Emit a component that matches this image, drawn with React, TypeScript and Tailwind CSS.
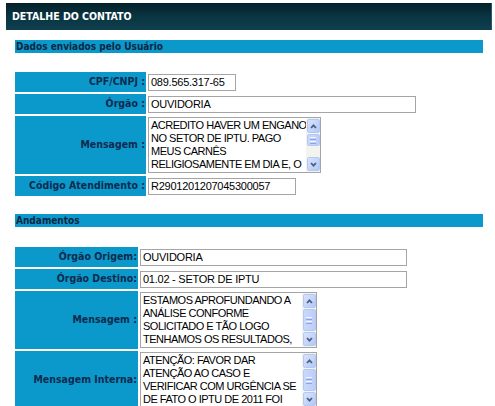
const labelFont = { fontFamily: '"DejaVu Sans Condensed", "Liberation Sans", sans-serif' };

function ScrollArrow({ up }: { up?: boolean }) {
  return (
    <div className="h-[14px] w-[13px] rounded-[2px] border border-[#b4c8f6] bg-gradient-to-br from-[#d8e4fd] to-[#b3c8f5] flex items-center justify-center">
      <svg width="7" height="5" viewBox="0 0 7 5">
        <path d={up ? "M1 4 L3.5 1.3 L6 4" : "M1 1 L3.5 3.7 L6 1"} fill="none" stroke="#4d6185" strokeWidth="1.8" />
      </svg>
    </div>
  );
}

function Scrollbar({ thumb }: { thumb: number }) {
  return (
    <div className="w-[14px] h-full bg-[#f3f3ef] flex flex-col items-center pt-[1px] pb-[1px]">
      <ScrollArrow up />
      <div
        className="w-[13px] rounded-[2px] border border-[#b4c8f6] bg-gradient-to-r from-[#c9d8fc] to-[#bccdf7] flex flex-col items-center justify-center gap-[1px] mt-[1px]"
        style={{ height: thumb }}
      >
        <div className="w-[6px] h-[1px] bg-[#eef3fe]" />
        <div className="w-[6px] h-[1px] bg-[#8ca3e0]" />
        <div className="w-[6px] h-[1px] bg-[#eef3fe]" />
        <div className="w-[6px] h-[1px] bg-[#8ca3e0]" />
      </div>
      <div className="flex-1" />
      <ScrollArrow />
    </div>
  );
}

function TextBox({ value, width }: { value: string; width: string }) {
  return (
    <div
      className={`${width} h-[17px] border border-[#a5a5a5] bg-white px-[2px] text-[11px] leading-[15px] text-black tracking-[-0.25px] whitespace-nowrap overflow-hidden`}
      style={{ fontFamily: '"Liberation Sans", Arial, sans-serif' }}
    >
      {value}
    </div>
  );
}

function TextArea({ lines, width, height, thumb }: { lines: string[]; width: string; height: string; thumb: number }) {
  return (
    <div className={`${width} ${height} border border-[#a5a5a5] bg-white flex overflow-hidden`}>
      <div
        className="flex-1 pl-[2px] pt-[1px] text-[11px] leading-[13px] text-black tracking-[-0.5px] overflow-hidden"
        style={{ fontFamily: '"Liberation Sans", Arial, sans-serif' }}
      >
        {lines.map((l) => (
          <div key={l} className="whitespace-nowrap">{l}</div>
        ))}
      </div>
      <Scrollbar thumb={thumb} />
    </div>
  );
}

function Row({ label, labelW, h, children }: { label: string; labelW: string; h: string; children: React.ReactNode }) {
  return (
    <div className={`flex gap-[2px] ${h}`}>
      <div
        className={`${labelW} bg-[#0b98ca] flex items-center justify-end pr-[1px] text-[10.5px] font-bold text-[#0e2b4f]`}
        style={labelFont}
      >
        {label}
      </div>
      <div className="flex items-center">{children}</div>
    </div>
  );
}

function SectionBar({ title }: { title: string }) {
  return (
    <div
      className="ml-[15px] w-[468px] h-[13px] bg-[#0b98ca] pl-[1px] text-[10px] leading-[13px] font-bold text-[#0b2744]"
      style={labelFont}
    >
      {title}
    </div>
  );
}

export default function App() {
  return (
    <div className="w-[495px] h-[406px] bg-white overflow-hidden pt-[3px]">
      <div
        className="ml-[6px] w-[486px] h-[27px] bg-gradient-to-b from-[#03202a] via-[#0a3542] to-[#0f3f4e] border-r border-[#2d5866] flex items-center pl-[6px] text-[10.5px] font-bold text-white"
        style={labelFont}
      >
        DETALHE DO CONTATO
      </div>

      <div className="mt-[10px]">
        <SectionBar title="Dados enviados pelo Usuário" />
      </div>

      <div className="mt-[19px] ml-[15px] flex flex-col gap-[2px]">
        <Row label="CPF/CNPJ :" labelW="w-[131px]" h="h-[20px]">
          <TextBox value="089.565.317-65" width="w-[88px]" />
        </Row>
        <Row label="Órgão :" labelW="w-[131px]" h="h-[20px]">
          <TextBox value="OUVIDORIA" width="w-[268px]" />
        </Row>
        <Row label="Mensagem :" labelW="w-[131px]" h="h-[58px]">
          <TextArea
            width="w-[173px]"
            height="h-[56px]"
            thumb={12}
            lines={["ACREDITO HAVER UM ENGANO", "NO SETOR DE IPTU. PAGO", "MEUS CARNÊS", "RELIGIOSAMENTE EM DIA E, O"]}
          />
        </Row>
        <Row label="Código Atendimento :" labelW="w-[131px]" h="h-[20px]">
          <TextBox value="R2901201207045300057" width="w-[148px]" />
        </Row>
      </div>

      <div className="mt-[18px]">
        <SectionBar title="Andamentos" />
      </div>

      <div className="mt-[20px] ml-[15px] flex flex-col gap-[2px]">
        <Row label="Órgão Origem:" labelW="w-[123px]" h="h-[20px]">
          <TextBox value="OUVIDORIA" width="w-[267px]" />
        </Row>
        <Row label="Órgão Destino:" labelW="w-[123px]" h="h-[20px]">
          <TextBox value="01.02 - SETOR DE IPTU" width="w-[267px]" />
        </Row>
        <Row label="Mensagem :" labelW="w-[123px]" h="h-[58px]">
          <TextArea
            width="w-[177px]"
            height="h-[56px]"
            thumb={22}
            lines={["ESTAMOS APROFUNDANDO A", "ANÁLISE CONFORME", "SOLICITADO E TÃO LOGO", "TENHAMOS OS RESULTADOS,"]}
          />
        </Row>
        <Row label="Mensagem Interna:" labelW="w-[123px]" h="h-[58px]">
          <TextArea
            width="w-[177px]"
            height="h-[56px]"
            thumb={22}
            lines={["ATENÇÃO: FAVOR DAR", "ATENÇÃO AO CASO E", "VERIFICAR COM URGÊNCIA SE", "DE FATO O IPTU DE 2011 FOI"]}
          />
        </Row>
      </div>
    </div>
  );
}
